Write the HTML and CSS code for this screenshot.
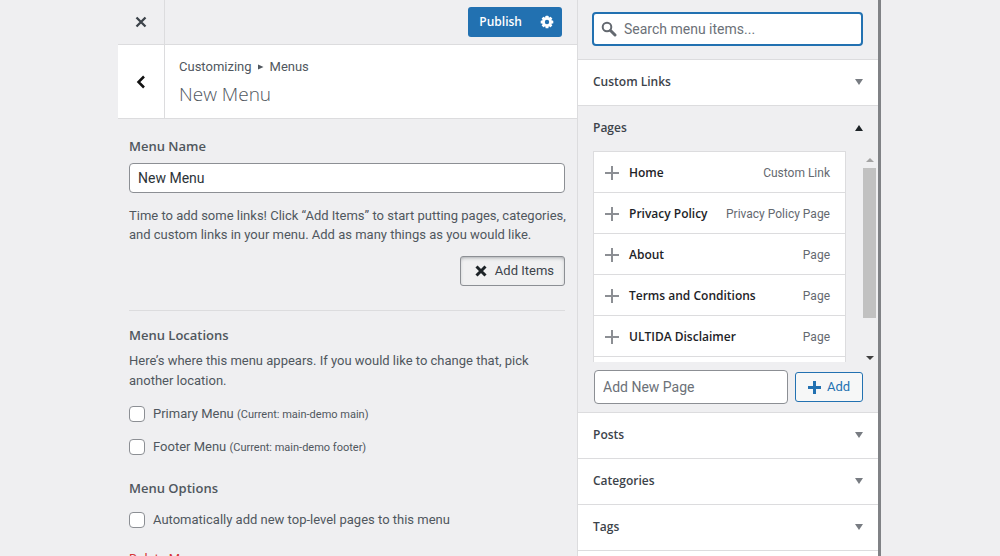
FILE: index.html
```html
<!DOCTYPE html>
<html lang="en">
<head>
<meta charset="utf-8">
<title>Customize: New Menu</title>
<link rel="stylesheet" href="styles.css">
</head>
<body>
<div class="customizer">
  <main class="controls">
    <header class="topbar">
      <button class="close" type="button" aria-label="Close">
        <svg width="12" height="12" viewBox="0 0 12 12"><path d="M1.500 1.500l9 9M10.500 1.500l-9 9" fill="none" stroke="#3c434a" stroke-width="2.300"/></svg>
      </button>
      <div class="actions">
        <button class="publish" type="button">Publish</button>
        <button class="settings" type="button" aria-label="Publish settings">
          <svg width="14" height="14" viewBox="0 0 14 14"><g fill="#fff"><circle cx="7" cy="7" r="4.900"/><rect x="5.500" y="0.700" width="3" height="12.600" rx="0.600"/><rect x="0.700" y="5.500" width="12.600" height="3" rx="0.600"/><g transform="rotate(45 7 7)"><rect x="5.500" y="0.700" width="3" height="12.600" rx="0.600"/><rect x="0.700" y="5.500" width="12.600" height="3" rx="0.600"/></g></g><circle cx="7" cy="7" r="2.200" fill="#2271b1"/></svg>
        </button>
      </div>
    </header>
    <div class="heading">
      <button class="back" type="button" aria-label="Back">
        <svg width="10" height="14" viewBox="0 0 10 14"><path d="M8 1.500L2.500 7 8 12.500" fill="none" stroke="#111" stroke-width="2.500"/></svg>
      </button>
      <div class="heading-text">
        <p class="crumbs">Customizing <svg width="6" height="6" viewBox="0 0 6 6"><path d="M0 0.500L5.500 3 0 5.500z" fill="#50575e"/></svg> Menus</p>
        <h1 class="title">New Menu</h1>
      </div>
    </div>
    <form class="fields">
      <label class="label" for="menu-name">Menu Name</label>
      <input class="text-input menu-name" id="menu-name" type="text" value="New Menu">
      <p class="hint">Time to add some links! Click “Add Items” to start putting pages, categories, and custom links in your menu. Add as many things as you would like.</p>
      <button class="add-items" type="button">
        <svg width="12" height="12" viewBox="0 0 12 12"><path d="M1.500 1.500l9 9M10.500 1.500l-9 9" fill="none" stroke="#1d2327" stroke-width="3"/></svg>
        Add Items
      </button>
      <hr class="rule">
      <h2 class="label">Menu Locations</h2>
      <p class="about">Here’s where this menu appears. If you would like to change that, pick another location.</p>
      <label class="check"><input type="checkbox"><span>Primary Menu <small>(Current: main-demo main)</small></span></label>
      <label class="check"><input type="checkbox"><span>Footer Menu <small>(Current: main-demo footer)</small></span></label>
      <h2 class="label options">Menu Options</h2>
      <label class="check"><input type="checkbox"><span>Automatically add new top-level pages to this menu</span></label>
      <button class="delete" type="button">Delete Menu</button>
    </form>
  </main>
  <aside class="available">
    <div class="search">
      <svg width="16" height="16" viewBox="0 0 16 16"><circle cx="6" cy="6" r="4.300" fill="none" stroke="#646970" stroke-width="2"/><path d="M9.500 9.500l4.500 4.500" stroke="#646970" stroke-width="3" stroke-linecap="round"/></svg>
      <input type="text" placeholder="Search menu items..." aria-label="Search menu items">
    </div>
    <button class="section" type="button">Custom Links <svg width="8" height="6" viewBox="0 0 8 6"><path d="M0 0h8L4 6z"/></svg></button>
    <section class="pages">
      <button class="section open" type="button">Pages <svg width="8" height="6" viewBox="0 0 8 6"><path d="M0 6h8L4 0z"/></svg></button>
      <div class="list-area">
        <ul class="items">
          <li><button class="item" type="button"><svg width="14" height="14" viewBox="0 0 14 14"><path d="M7 0v14M0 7h14"/></svg><span class="name">Home</span><span class="kind">Custom Link</span></button></li>
          <li><button class="item" type="button"><svg width="14" height="14" viewBox="0 0 14 14"><path d="M7 0v14M0 7h14"/></svg><span class="name">Privacy Policy</span><span class="kind">Privacy Policy Page</span></button></li>
          <li><button class="item" type="button"><svg width="14" height="14" viewBox="0 0 14 14"><path d="M7 0v14M0 7h14"/></svg><span class="name">About</span><span class="kind">Page</span></button></li>
          <li><button class="item" type="button"><svg width="14" height="14" viewBox="0 0 14 14"><path d="M7 0v14M0 7h14"/></svg><span class="name">Terms and Conditions</span><span class="kind">Page</span></button></li>
          <li><button class="item" type="button"><svg width="14" height="14" viewBox="0 0 14 14"><path d="M7 0v14M0 7h14"/></svg><span class="name">ULTIDA Disclaimer</span><span class="kind">Page</span></button></li>
        </ul>
        <div class="scrollbar" aria-hidden="true">
          <svg width="8" height="4" viewBox="0 0 8 4"><path d="M0 4h8L4 0z" fill="#a3a3a3"/></svg>
          <div class="thumb"></div>
          <svg class="down" width="8" height="4" viewBox="0 0 8 4"><path d="M0 0h8L4 4z" fill="#404040"/></svg>
        </div>
      </div>
      <div class="new-page">
        <input class="text-input" type="text" placeholder="Add New Page" aria-label="Add New Page">
        <button class="add" type="button"><svg width="13" height="13" viewBox="0 0 13 13"><path d="M6.500 0v13M0 6.500h13" stroke="#2271b1" stroke-width="3"/></svg>Add</button>
      </div>
    </section>
    <button class="section" type="button">Posts <svg width="8" height="6" viewBox="0 0 8 6"><path d="M0 0h8L4 6z"/></svg></button>
    <button class="section" type="button">Categories <svg width="8" height="6" viewBox="0 0 8 6"><path d="M0 0h8L4 6z"/></svg></button>
    <button class="section" type="button">Tags <svg width="8" height="6" viewBox="0 0 8 6"><path d="M0 0h8L4 6z"/></svg></button>
    <div class="filler"></div>
  </aside>
</div>
</body>
</html>
```
FILE: styles.css
```css
* { box-sizing: border-box; }

body {
  margin: 0;
  height: 100vh;
  overflow: hidden;
  background: #efeff1;
  color: #50575e;
  font: 13px/20px Roboto, "Noto Sans", sans-serif;
}

h1, h2, p, ul { margin: 0; padding: 0; }
ul { list-style: none; }
svg { display: block; flex: none; }
button, input { font: inherit; color: inherit; margin: 0; }
button { padding: 0; border: 0; background: none; cursor: pointer; }

.title, .label, .publish, .section, .name {
  font-family: "Open Sans", "Noto Sans", sans-serif;
}

.customizer {
  display: grid;
  grid-template-columns: minmax(0, 1fr) 304px;
  min-height: 100vh;
  padding: 0 119px 0 118px;
}

.topbar {
  display: flex;
  justify-content: space-between;
  align-items: center;
  height: 45px;
  padding-right: 15px;
  border-bottom: 1px solid #dcdcde;
}

.close, .back {
  display: flex;
  align-items: center;
  justify-content: center;
  align-self: stretch;
  width: 47px;
  border-right: 1px solid #dcdcde;
}

.actions {
  display: flex;
  height: 30px;
  border-radius: 3px;
  background: #2271b1;
  color: #fff;
}
.publish { padding: 0 9px 0 11px; font-size: 12px; font-weight: 600; }
.settings { display: flex; align-items: center; justify-content: center; width: 31px; }

.heading {
  display: flex;
  height: 74px;
  background: #fff;
  border-bottom: 1px solid #dcdcde;
}
.heading-text { padding: 12px 14px; }
.crumbs { display: flex; align-items: center; gap: 6px; }
.title {
  padding-top: 4px;
  font-size: 19px;
  font-weight: 300;
  line-height: 26px;
}

.fields {
  display: flex;
  flex-direction: column;
  padding: 17px 12px 0 11px;
}
.label {
  color: #50575e;
  font-size: 13px;
  font-weight: 600;
  line-height: 20px;
}
.text-input {
  width: 100%;
  border: 1px solid #8c8f94;
  border-radius: 4px;
  background: #fff;
  padding: 0 8px;
  color: #2c3338;
}
.text-input::placeholder, .search input::placeholder { color: #6c7178; opacity: 1; }
.menu-name { height: 30px; margin-top: 7px; font-size: 14px; }
.hint { margin: 13px -4px 0 0; line-height: 19px; }
.add-items {
  display: flex;
  align-items: center;
  align-self: flex-end;
  gap: 8px;
  height: 30px;
  margin-top: 12px;
  padding: 0 10px 0 14px;
  border: 1px solid #8c8f94;
  border-radius: 3px;
  background: #f0f0f1;
  box-shadow: inset 0 2px 5px -3px #50575e;
  color: #3c434a;
}
.rule {
  width: 100%;
  height: 1px;
  margin: 24px 0 14px;
  border: 0;
  background: #dcdcde;
}
.about { margin: 6px 0 13px; }
.check {
  display: flex;
  align-items: center;
  gap: 8px;
  height: 20px;
  margin-bottom: 13px;
}
.check input {
  appearance: none;
  width: 16px;
  height: 16px;
  border: 1px solid #8c8f94;
  border-radius: 4px;
  background: #fff;
}
.check small { font-size: 11px; }
.options { margin: 8px 0 12px; }
.delete { align-self: flex-start; margin-top: 6px; color: #d63638; }

.available {
  display: flex;
  flex-direction: column;
  border-left: 1px solid #dcdcde;
  border-right: 3px solid #808286;
}
.search {
  display: flex;
  align-items: center;
  gap: 7px;
  height: 34px;
  margin: 12px 15px 13px 14px;
  padding: 0 7px;
  border: 2px solid #2271b1;
  border-radius: 4px;
  background: #fff;
}
.search input {
  flex: 1;
  min-width: 0;
  padding: 0;
  border: 0;
  outline: 0;
  background: none;
  font-size: 14px;
}
.section {
  display: flex;
  align-items: center;
  justify-content: space-between;
  width: 100%;
  height: 46px;
  padding: 0 15px 2px;
  border-top: 1px solid #dcdcde;
  background: #fff;
  color: #3c434a;
  font-size: 12px;
  font-weight: 600;
  text-align: left;
}
.section svg { fill: #787c82; }
.open { background: none; }
.open svg { fill: #1d2327; }

.list-area {
  display: flex;
  justify-content: space-between;
  height: 211px;
  padding-left: 15px;
}
.items {
  flex: 1;
  overflow: hidden;
  border: 1px solid #dcdcde;
  border-bottom: 0;
  background: #fff;
}
.item {
  display: flex;
  align-items: center;
  width: 100%;
  height: 41px;
  padding: 2px 15px 0 11px;
  border-bottom: 1px solid #dcdcde;
}
.item path { fill: none; stroke: #8c8f94; stroke-width: 2; }
.name { margin-left: 10px; color: #1d2327; font-size: 12px; font-weight: 600; }
.kind { margin-left: auto; color: #646970; font-size: 12px; }
.scrollbar {
  display: flex;
  flex-direction: column;
  align-items: center;
  width: 13px;
  margin: 0 2px 0 17px;
  padding: 7px 0 2px;
}
.thumb { width: 100%; height: 150px; margin-top: 6px; background: #c1c1c1; }
.down { margin-top: auto; }
.new-page {
  display: flex;
  align-items: center;
  gap: 7px;
  padding: 8px 15px 8px 16px;
}
.new-page .text-input { flex: 1; min-width: 0; height: 34px; font-size: 14px; }
.add {
  display: flex;
  align-items: center;
  justify-content: center;
  gap: 6px;
  width: 68px;
  height: 30px;
  border: 1px solid #2271b1;
  border-radius: 3px;
  background: #f6f7f7;
  color: #2271b1;
}
.filler { flex: 1; border-top: 1px solid #dcdcde; background: #fff; }
```
